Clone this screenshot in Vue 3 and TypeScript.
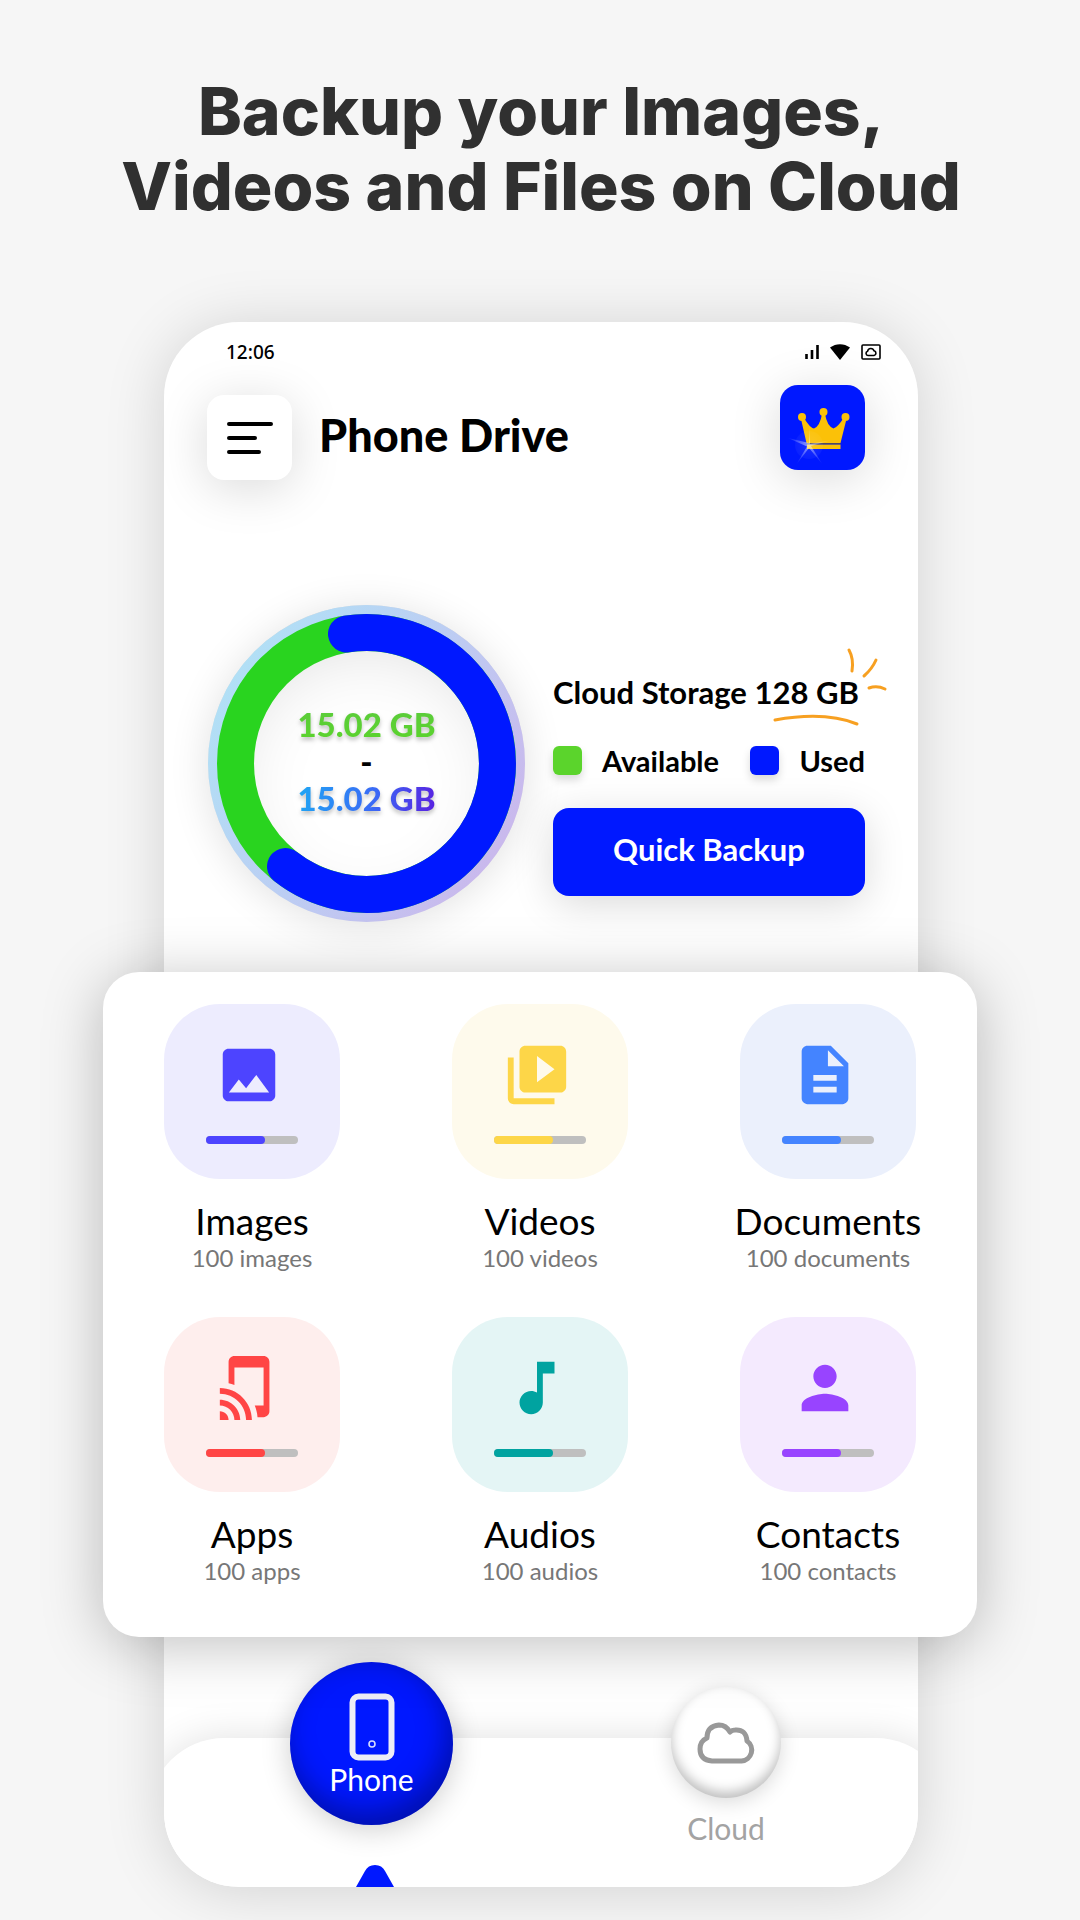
<script setup lang="ts">
interface Category {
  name: string
  detail: string
  color: string
  tint: string
  used: number
  icon: string
}

const categories: Category[] = [
  {
    name: 'Images',
    detail: '100 images',
    color: '#4d44ff',
    tint: '#edecfe',
    used: 64,
    icon: 'M21 19V5c0-1.1-.9-2-2-2H5c-1.1 0-2 .9-2 2v14c0 1.1.9 2 2 2h14c1.1 0 2-.9 2-2zM5.1 18l3.4-4.5 2.5 3 3.5-4.5 4.4 6z',
  },
  {
    name: 'Videos',
    detail: '100 videos',
    color: '#fdd648',
    tint: '#fefaec',
    used: 64,
    icon: 'M4 6H2v14c0 1.1.9 2 2 2h14v-2H4V6zM20 2H8c-1.1 0-2 .9-2 2v12c0 1.1.9 2 2 2h12c1.1 0 2-.9 2-2V4c0-1.1-.9-2-2-2zM12 14.5v-9l6 4.5z',
  },
  {
    name: 'Documents',
    detail: '100 documents',
    color: '#4484ff',
    tint: '#ebf0fc',
    used: 64,
    icon: 'M14 2H6c-1.1 0-2 .9-2 2v16c0 1.1.9 2 2 2h12c1.1 0 2-.9 2-2V8zM16 18H8v-2h8zM16 14H8v-2h8zM13 9V3.5L18.5 9z',
  },
  {
    name: 'Apps',
    detail: '100 apps',
    color: '#ff4545',
    tint: '#feeeed',
    used: 64,
    icon: 'M2 16v2c2.76 0 5 2.24 5 5h2c0-3.87-3.13-7-7-7zM2 20v3h3c0-1.66-1.34-3-3-3zM2 12v2c4.97 0 9 4.03 9 9h2c0-6.08-4.92-11-11-11zM17 1.01L7 1c-1.1 0-2 .9-2 2v7.37c.69.16 1.36.37 2 .64V5h10v13h-3.03c.52 1.25.84 2.59.95 4H17c1.1 0 2-.9 2-2V3c0-1.1-.9-1.99-2-1.99z',
  },
  {
    name: 'Audios',
    detail: '100 audios',
    color: '#00a3a0',
    tint: '#e4f5f5',
    used: 64,
    icon: 'M12 3v10.55c-.59-.34-1.27-.55-2-.55-2.21 0-4 1.79-4 4s1.79 4 4 4 4-1.79 4-4V7h4V3z',
  },
  {
    name: 'Contacts',
    detail: '100 contacts',
    color: '#9844ff',
    tint: '#f4eafe',
    used: 64,
    icon: 'M12 12c2.21 0 4-1.79 4-4s-1.79-4-4-4-4 1.79-4 4 1.79 4 4 4zM12 14c-2.67 0-8 1.34-8 4v2h16v-2c0-2.66-5.33-4-8-4z',
  },
]
</script>

<template>
  <div class="page">
    <h1 class="headline">Backup your Images,<br />Videos and Files on Cloud</h1>

    <main class="phone">
      <div class="status">
        <span>12:06</span>
        <div class="status-icons">
          <svg width="14" height="16" viewBox="0 0 14 16" stroke="#000" stroke-width="2.6">
            <path d="M1.5 15v-5M7 15V6M12.5 15V1" />
          </svg>
          <svg width="20" height="16" viewBox="0 0 20 16">
            <path d="M0 3.5C6-1 14-1 20 3.5L10 16z" />
          </svg>
          <svg width="20" height="16" viewBox="0 0 20 16" fill="none" stroke="#000" stroke-width="1.6">
            <rect x="1" y="1" width="18" height="14" rx="1" />
            <path d="M7 11.5a2.2 2.2 0 0 1-.4-4.3A3.3 3.3 0 0 1 13 6.8a2.4 2.4 0 0 1 0 4.7z" />
          </svg>
        </div>
      </div>

      <header class="appbar">
        <div class="brand">
          <button class="menu" type="button" aria-label="Menu">
            <svg width="46" height="34" viewBox="0 0 46 34" stroke="#000" stroke-width="4" stroke-linecap="round">
              <path d="M2 3h42M2 17h26M2 31h30" />
            </svg>
          </button>
          <h2>Phone Drive</h2>
        </div>
        <button class="premium" type="button" aria-label="Premium">
          <svg width="85" height="85" viewBox="0 0 85 85">
            <defs>
              <radialGradient id="glow" gradientUnits="userSpaceOnUse" cx="29" cy="60" r="23">
                <stop offset="0" stop-color="#fff" stop-opacity=".5" />
                <stop offset="1" stop-color="#fff" stop-opacity="0" />
              </radialGradient>
            </defs>
            <g fill="#fbc108">
              <circle cx="22" cy="32" r="4" />
              <circle cx="43.5" cy="27" r="4" />
              <circle cx="65.5" cy="32" r="4" />
              <path d="M21 34l3-1q6 10 10 10.5Q40 41 42 29h3q2 12 8.5 14.500Q58 42 63.5 33l3 1L60.5 58h-34z" />
              <path d="M27 59.5h33.5v4.500H27z" />
            </g>
            <path d="M27 58.800h33.5" stroke="#6b5a2c" />
            <path
              d="M29 58L8 53 27 61.500 16 80 29 63 43 80 31 61 52 55 30 59 30 38z"
              fill="url(#glow)"
            />
            <circle cx="29" cy="60" r="14" fill="url(#glow)" opacity=".2" />
          </svg>
        </button>
      </header>

      <section class="overview">
        <div class="ring">
          <svg viewBox="0 0 317 317">
            <defs>
              <linearGradient id="rim" x1="0" y1=".2" x2="1" y2=".8">
                <stop offset="0" stop-color="#b0e2f6" />
                <stop offset=".5" stop-color="#bccdf3" />
                <stop offset="1" stop-color="#cbb6ec" />
              </linearGradient>
            </defs>
            <circle cx="158.5" cy="158.5" r="153" fill="none" stroke="url(#rim)" stroke-width="11" />
            <circle cx="158.5" cy="158.5" r="131" fill="none" stroke="#29d41f" stroke-width="37" />
            <path
              d="M138.5 29A131 131 0 1 1 77.5 261.5"
              fill="none"
              stroke="#0018ff"
              stroke-width="37"
              stroke-linecap="round"
            />
          </svg>
          <div class="amounts">
            <span class="amount free">15.02 GB</span>
            <span>-</span>
            <span class="amount taken">15.02 GB</span>
          </div>
        </div>

        <div class="storage">
          <p class="capacity">
            Cloud Storage 128 GB
            <svg class="flourish" viewBox="0 0 120 84" fill="none" stroke="#f7a021" stroke-width="3" stroke-linecap="round">
              <path d="M5 75q50-9 82 4M79 5q5 9 3 21M106 15q-4 9-12 16M99 43q8-3 16 1" />
            </svg>
          </p>
          <ul class="legend">
            <li><i class="swatch available"></i>Available</li>
            <li><i class="swatch used"></i>Used</li>
          </ul>
          <button class="backup" type="button">Quick Backup</button>
        </div>
      </section>

      <section class="card">
        <button v-for="c in categories" :key="c.name" class="category" type="button">
          <span class="tile" :style="{ background: c.tint }">
            <svg class="glyph" viewBox="0 0 24 24" :fill="c.color" fill-rule="evenodd">
              <path :d="c.icon" />
            </svg>
            <span class="track">
              <span class="fill" :style="{ width: c.used + '%', background: c.color }"></span>
            </span>
          </span>
          <span class="name">{{ c.name }}</span>
          <span class="detail">{{ c.detail }}</span>
        </button>
      </section>

      <div class="dock">
        <nav class="tabs">
          <div class="tab">
            <button class="phone-tab" type="button">
              <svg width="46" height="68" viewBox="0 0 46 68" fill="none">
                <rect x="3.5" y="3.5" width="39" height="61" rx="6" stroke="#ededf6" stroke-width="6" />
                <circle cx="23" cy="51" r="3" stroke="#d5dcff" stroke-width="1.6" />
              </svg>
              Phone
            </button>
            <svg width="46" height="22" viewBox="0 0 46 22" fill="#0018ff">
              <path d="M7 22L16 6Q19 0 26 0T36 6L45 22z" />
            </svg>
          </div>
          <button class="cloud-tab" type="button">
            <span class="disc">
              <svg width="58" height="42" viewBox="0 0 58 42" fill="none" stroke="#999" stroke-width="5" stroke-linejoin="round">
                <path d="M15 39h29.500A11 11 0 0 0 50 19q-1-12-12-11-3 0-5 2Q29 3 22 3 10 4 10 16 3 19 3 27 3 38 15 39z" />
              </svg>
            </span>
            Cloud
          </button>
        </nav>
      </div>
    </main>
  </div>
</template>

<style>
body {
  margin: 0;
  background: #f6f6f6;
}
</style>

<style scoped>
.page {
  box-sizing: border-box;
  min-height: 100vh;
  padding: 74px 162px 33px 164px;
  background: #f6f6f6;
  font-family: Lato, 'Open Sans', sans-serif;
  color: #000;
}

button {
  padding: 0;
  border: 0;
  background: none;
  font-family: inherit;
  color: inherit;
  cursor: pointer;
}

svg {
  display: block;
  flex: none;
}

.headline {
  margin: 0 -100px 98px;
  font: 800 66px/75px Inter, sans-serif;
  text-align: center;
  color: #303030;
}

.phone {
  border-radius: 75px;
  background: #fff;
  box-shadow: 0 4px 60px rgba(0, 0, 0, 0.15);
}

.status {
  display: flex;
  align-items: center;
  justify-content: space-between;
  height: 60px;
  padding: 0 37px 0 62px;
  font: 500 19px/24px 'Noto Sans', sans-serif;
}

.status-icons {
  display: flex;
  gap: 11px;
}

.appbar {
  display: flex;
  align-items: flex-start;
  justify-content: space-between;
  height: 95px;
  padding: 3px 53px 0 43px;
}

.brand {
  display: flex;
  align-items: flex-start;
  align-self: flex-end;
  gap: 27px;
}

.menu {
  display: grid;
  place-items: center;
  width: 85px;
  height: 85px;
  border-radius: 17px;
  background: #fff;
  box-shadow: 0 8px 50px rgba(0, 0, 0, 0.15);
}

.brand h2 {
  margin: 0;
  font-size: 45px;
  line-height: 80px;
  font-weight: 900;
}

.premium {
  width: 85px;
  height: 85px;
  border-radius: 18px;
  background: #0018ff;
  box-shadow: 0 8px 50px rgba(0, 0, 0, 0.15);
}

.overview {
  display: flex;
  gap: 28px;
  padding: 125px 53px 50px 44px;
}

.ring {
  display: grid;
  flex: none;
  width: 317px;
  height: 317px;
  border-radius: 50%;
  box-shadow: 0 4px 40px rgba(0, 0, 0, 0.12), inset 0 20px 90px rgba(0, 0, 0, 0.2);
}

.ring > * {
  grid-area: 1 / 1;
}

.amounts {
  display: flex;
  flex-direction: column;
  align-items: center;
  justify-content: center;
  padding-bottom: 4px;
  font-size: 33px;
  line-height: 37px;
  font-weight: 900;
}

.amount {
  background-clip: text;
  color: transparent;
  filter: drop-shadow(0 3px 2px rgba(0, 0, 0, 0.25));
}

.free {
  background-image: linear-gradient(#5bcb3c, #5bd42c);
}

.taken {
  background-image: linear-gradient(100deg, #1ea8f4, #3a6af6 55%, #5a1fe0);
}

.storage {
  flex: 1;
  align-self: flex-end;
  padding-bottom: 26px;
}

.capacity {
  position: relative;
  margin: 0 0 35px;
  font-size: 31px;
  line-height: 37px;
  font-weight: 700;
  white-space: nowrap;
}

.flourish {
  position: absolute;
  top: -29px;
  right: -25px;
  width: 120px;
  height: 84px;
}

.legend {
  display: flex;
  justify-content: space-between;
  margin: 0 0 33px;
  padding: 0;
  list-style: none;
  font-size: 29px;
  line-height: 29px;
  font-weight: 700;
}

.legend li {
  display: flex;
  gap: 20px;
}

.swatch {
  width: 29px;
  height: 29px;
  border-radius: 6px;
  box-shadow: 0 5px 8px rgba(0, 0, 0, 0.15);
}

.available {
  background: #5bd42c;
}

.used {
  background: #0018ff;
}

.backup {
  width: 100%;
  height: 88px;
  padding-bottom: 6px;
  border-radius: 16px;
  background: #0018ff;
  box-shadow: 0 8px 40px rgba(0, 0, 0, 0.15);
  font-size: 31px;
  font-weight: 700;
  color: #fff;
}

.card {
  position: relative;
  z-index: 1;
  display: grid;
  grid-template-columns: repeat(3, 1fr);
  row-gap: 45px;
  margin: 0 -59px 0 -61px;
  padding: 32px 5px 52px;
  border-radius: 36px;
  background: #fff;
  box-shadow: 0 8px 60px rgba(0, 0, 0, 0.25);
}

.category {
  display: flex;
  flex-direction: column;
  align-items: center;
}

.tile {
  display: flex;
  flex-direction: column;
  align-items: center;
  box-sizing: border-box;
  width: 176px;
  height: 175px;
  margin-bottom: 21px;
  padding-top: 36px;
  border-radius: 56px;
}

.glyph {
  width: 70px;
  height: 70px;
  margin: 0 6px 26px 0;
}

.track {
  width: 92px;
  height: 8px;
  border-radius: 4px;
  background: #bfbfbf;
}

.fill {
  display: block;
  height: 8px;
  border-radius: 4px;
}

.name {
  font-size: 37px;
  line-height: 42px;
}

.detail {
  margin-top: 2px;
  font-size: 24px;
  line-height: 28px;
  color: #777;
}

.dock {
  overflow: hidden;
  padding-top: 101px;
  border-radius: 0 0 75px 75px;
}

.tabs {
  display: flex;
  align-items: flex-start;
  justify-content: space-between;
  height: 149px;
  margin: 0 -33px 0 -15px;
  padding: 0 170px 0 141px;
  border-radius: 75px 75px 0 0;
  background: #fff;
  box-shadow: 0 0 40px rgba(0, 0, 0, 0.12);
}

.tab {
  display: flex;
  flex-direction: column;
  align-items: center;
  gap: 40px;
  margin-top: -76px;
}

.phone-tab {
  display: flex;
  flex-direction: column;
  align-items: center;
  gap: 1px;
  box-sizing: border-box;
  width: 163px;
  height: 163px;
  padding-top: 31px;
  border-radius: 50%;
  background: #0018ff;
  box-shadow: 0 4px 30px rgba(0, 0, 0, 0.2), inset -6px -14px 28px rgba(0, 0, 30, 0.35);
  font-size: 30px;
  line-height: 34px;
  color: #fff;
}

.cloud-tab {
  display: flex;
  flex-direction: column;
  align-items: center;
  gap: 13px;
  margin-top: -51px;
  font-size: 30px;
  line-height: 34px;
  color: #a3a3a3;
}

.disc {
  display: grid;
  place-items: center;
  width: 110px;
  height: 111px;
  border-radius: 50%;
  background: #fff;
  box-shadow: 0 4px 20px rgba(0, 0, 0, 0.15), inset 0 -6px 12px rgba(0, 0, 0, 0.25);
}
</style>
